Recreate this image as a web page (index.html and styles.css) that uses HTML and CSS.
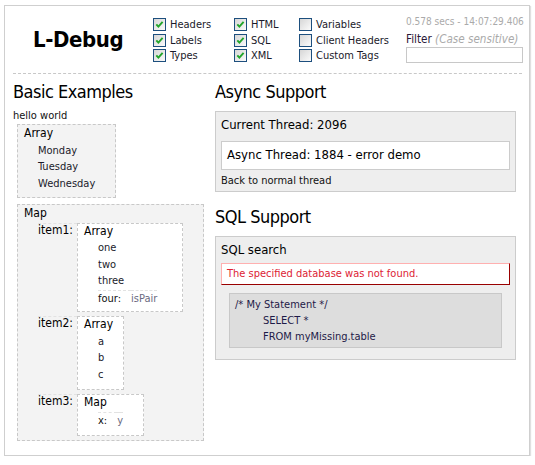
FILE: index.html
```html
<!DOCTYPE html>
<html>
<head>
<meta charset="utf-8">
<title>L-Debug</title>
<link rel="stylesheet" href="styles.css">
</head>
<body>
<div class="page">
  <header class="top">
    <div class="logo">L-Debug</div>
    <div class="opts c1">
      <div class="opt"><span class="cb"><svg width="11" height="11" viewBox="0 0 11 11"><path d="M2.3 5.3 L4.4 7.6 L8.6 2.8" fill="none" stroke="#22a52a" stroke-width="1.9"/></svg></span>Headers</div>
      <div class="opt"><span class="cb"><svg width="11" height="11" viewBox="0 0 11 11"><path d="M2.3 5.3 L4.4 7.6 L8.6 2.8" fill="none" stroke="#22a52a" stroke-width="1.9"/></svg></span>Labels</div>
      <div class="opt"><span class="cb"><svg width="11" height="11" viewBox="0 0 11 11"><path d="M2.3 5.3 L4.4 7.6 L8.6 2.8" fill="none" stroke="#22a52a" stroke-width="1.9"/></svg></span>Types</div>
    </div>
    <div class="opts c2">
      <div class="opt"><span class="cb"><svg width="11" height="11" viewBox="0 0 11 11"><path d="M2.3 5.3 L4.4 7.6 L8.6 2.8" fill="none" stroke="#22a52a" stroke-width="1.9"/></svg></span>HTML</div>
      <div class="opt"><span class="cb"><svg width="11" height="11" viewBox="0 0 11 11"><path d="M2.3 5.3 L4.4 7.6 L8.6 2.8" fill="none" stroke="#22a52a" stroke-width="1.9"/></svg></span>SQL</div>
      <div class="opt"><span class="cb"><svg width="11" height="11" viewBox="0 0 11 11"><path d="M2.3 5.3 L4.4 7.6 L8.6 2.8" fill="none" stroke="#22a52a" stroke-width="1.9"/></svg></span>XML</div>
    </div>
    <div class="opts c3">
      <div class="opt"><span class="cb off"></span>Variables</div>
      <div class="opt"><span class="cb off"></span>Client Headers</div>
      <div class="opt"><span class="cb off"></span>Custom Tags</div>
    </div>
    <div class="filter">
      <div class="time">0.578 secs - 14:07:29.406</div>
      <div class="flabel">Filter <i>(Case sensitive)</i></div>
      <div class="finput"></div>
    </div>
  </header>
  <main class="cols">
    <section class="left">
      <h2>Basic Examples</h2>
      <div class="hello">hello world</div>
      <div class="dump arr1">
        <div class="dh">Array</div>
        <div class="it">Monday</div>
        <div class="it">Tuesday</div>
        <div class="it">Wednesday</div>
      </div>
      <div class="dump map1">
        <div class="dh">Map</div>
        <div class="kv">
          <div class="k">item1:</div>
          <div class="dump nest n1">
            <div class="dh">Array</div>
            <div class="it">one</div>
            <div class="it">two</div>
            <div class="it">three</div>
            <div class="kvi"><span class="ki">four:</span><span class="vi">isPair</span></div>
          </div>
        </div>
        <div class="kv">
          <div class="k">item2:</div>
          <div class="dump nest n2">
            <div class="dh">Array</div>
            <div class="it">a</div>
            <div class="it">b</div>
            <div class="it">c</div>
          </div>
        </div>
        <div class="kv">
          <div class="k">item3:</div>
          <div class="dump nest n3">
            <div class="dh">Map</div>
            <div class="kvi kvx"><span class="ki">x:</span><span class="vi">y</span></div>
          </div>
        </div>
      </div>
    </section>
    <section class="right">
      <h2>Async Support</h2>
      <div class="box">
        <h3>Current Thread: 2096</h3>
        <div class="inner">Async Thread: 1884 - error demo</div>
        <div class="note">Back to normal thread</div>
      </div>
      <h2 class="sec">SQL Support</h2>
      <div class="box">
        <h3>SQL search</h3>
        <div class="err">The specified database was not found.</div>
        <div class="code">
          <div>/* My Statement */</div>
          <div class="ind">SELECT *</div>
          <div class="ind">FROM myMissing.table</div>
        </div>
      </div>
    </section>
  </main>
</div>
</body>
</html>
```
FILE: styles.css
```css
body {
  margin: 0;
  background: #fff;
  color: #111;
  font-family: "DejaVu Sans Condensed", "DejaVu Sans", sans-serif;
}
.page {
  margin: 5px 0 0 4px;
  width: 509px;
  height: 449px;
  padding: 0 7px 0 8px;
  border: 1px solid #cfcfcf;
  box-shadow: 1px 1px 1px #e0e0e0;
}
.top {
  display: flex;
  height: 67px;
  border-bottom: 1px dashed #c8c8c8;
}
.logo {
  width: 140px;
  box-sizing: border-box;
  padding-left: 20px;
  align-self: center;
  font-size: 22px;
  font-weight: bold;
  letter-spacing: -0.4px;
  color: #000;
}
.opts { padding-top: 10.75px; }
.c1 { width: 81px; }
.c2 { width: 65px; }
.c3 { width: 107px; }
.opt {
  display: flex;
  align-items: center;
  gap: 4px;
  height: 15.5px;
  font-size: 11px;
  color: #1a1a2a;
  white-space: nowrap;
}
.cb {
  display: block;
  flex: none;
  width: 13px;
  height: 13px;
  box-sizing: border-box;
  border: 1px solid #1d4f7e;
  background: linear-gradient(135deg, #d6d6d6, #fbfbfb);
}
.cb svg { display: block; }
.filter {
  width: 116px;
  padding-top: 10px;
}
.time {
  font-size: 10px;
  line-height: 12px;
  color: #aaa;
  text-align: right;
  white-space: nowrap;
}
.flabel {
  margin-top: 4px;
  font-size: 11.6px;
  line-height: 14px;
  color: #2a1838;
  white-space: nowrap;
}
.flabel i { color: #aaa; }
.finput {
  width: 117px;
  height: 16px;
  box-sizing: border-box;
  margin-top: 1px;
  border: 1px solid #c8c8c8;
  background: #fff;
}
.cols {
  display: grid;
  grid-template-columns: 202px 301px;
  padding-top: 7px;
}
h2 {
  margin: 0;
  font-size: 18px;
  font-weight: normal;
  line-height: 22px;
  letter-spacing: -0.5px;
  color: #000;
}
.hello {
  margin-top: 6px;
  font-size: 11px;
  line-height: 14px;
}
.dump {
  box-sizing: border-box;
  border: 1px dashed #c8c8c8;
  background: #f3f3f3;
  padding: 1px 0 0 6px;
}
.nest { background: #fff; padding-top: 0; }
.dh {
  font-size: 12px;
  line-height: 15px;
  margin-bottom: 1.5px;
  color: #000;
}
.it {
  padding-left: 14px;
  font-size: 11px;
  line-height: 16.5px;
  color: #1a1a2a;
}
.arr1 { margin: 1px 0 0 4px; width: 99px; height: 74px; }
.map1 { margin: 5.5px 0 0 4px; width: 187px; height: 237px; }
.map1 > .dh { margin-bottom: 2.3px; }
.kv {
  display: flex;
  align-items: flex-start;
  margin-left: 14px;
  margin-bottom: 4.3px;
}
.k {
  width: 39px;
  box-sizing: border-box;
  padding-right: 5px;
  text-align: right;
  border-top: 1px dashed #e2e2e2;
  font-size: 12px;
  line-height: 12px;
  color: #000;
}
.n1 { width: 106px; height: 89px; }
.n2 { width: 47px; height: 74px; }
.n3 { width: 67px; height: 42px; }
.kvi {
  display: flex;
  margin-left: 14px;
  font-size: 11px;
  line-height: 15px;
}
.kvx { margin-top: 1.5px; }
.ki, .vi { border-top: 1px dashed #e2e2e2; }
.ki { padding-right: 10px; color: #111; }
.vi { color: #6a6a80; }
.right h2.sec { margin-top: 14.5px; }
.box {
  margin-top: 8px;
  border: 1px solid #ccc;
  background: #eee;
  padding: 5px 5px 3px;
}
h3 {
  margin: 0;
  font-size: 13px;
  font-weight: normal;
  line-height: 16px;
  color: #000;
}
.inner {
  margin-top: 8px;
  border: 1px solid #ccc;
  background: #fff;
  padding: 5px 5px 6px;
  font-size: 13px;
  line-height: 16px;
  color: #000;
}
.note {
  margin-top: 3.5px;
  font-size: 11px;
  line-height: 14px;
}
.err {
  margin-top: 5px;
  border: 1px solid;
  border-color: #ffb0b0 #990000 #990000 #ffb0b0;
  background: #fff;
  padding: 3px 5px;
  font-size: 11px;
  line-height: 14px;
  color: #dd2233;
}
.code {
  margin: 8px 8px;
  border: 1px solid #c8c8c8;
  background: #ddd;
  padding: 3px 5px 2px;
  font-size: 11px;
  line-height: 16px;
  color: #1e1a48;
}
.ind { padding-left: 28px; }
```
